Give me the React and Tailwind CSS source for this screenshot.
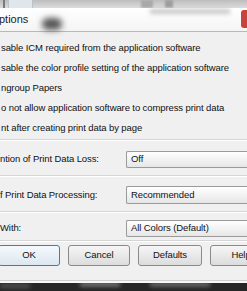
import React from 'react';

const checks = [
  'sable ICM required from the application software',
  'sable the color profile setting of the application software',
  'ngroup Papers',
  'o not allow application software to compress print data',
  'nt after creating print data by page',
];

const Separator = () => (
  <div className="h-[2px] border-t border-[#d5d5d5] border-b border-b-white" />
);

const Combo = ({ label, value, h }) => (
  <div className={`flex items-center ${h}`}>
    <div className="w-[126px] shrink-0 whitespace-nowrap">{label}</div>
    <div className="flex-1 h-full flex items-center pl-[4px] border border-[#9a9a9a] rounded-l-[2px] bg-gradient-to-b from-[#ffffff] to-[#e6e6e6] border-r-0 whitespace-nowrap">
      {value}
    </div>
  </div>
);

const Button = ({ children, primary, w = 'w-[62px]' }) => (
  <div
    className={`${w} h-[21px] shrink-0 flex items-center justify-center rounded-[3px] border ${
      primary
        ? 'border-[#3c7fb1] bg-gradient-to-b from-[#f4f9fc] to-[#dde7ef]'
        : 'border-[#8a8a8a] bg-gradient-to-b from-[#f6f6f6] to-[#dcdcdc]'
    }`}
  >
    {children}
  </div>
);

export default function App() {
  return (
    <div
      className="w-[247px] h-[291px] overflow-hidden bg-[#f0f0f0] text-[#111] text-[9.5px] tracking-[-0.1px] flex flex-col"
      style={{ fontFamily: '"Liberation Sans", Arial, sans-serif' }}
    >
      {/* window chrome above the dialog */}
      <div className="h-[8px] shrink-0 flex bg-gradient-to-b from-[#bdbdbd] to-[#dcdcdc]">
        <div className="w-[3px]" />
        <div className="w-[2px] bg-[#7a7a7a]" />
        <div className="w-[3px]" />
        <div className="w-[25px] bg-[#dfe6ec] border-x border-[#b9c3cc]" />
        <div className="w-[108px]" />
        <div className="w-[12px] bg-[#a9a9a9] blur-[1px]" />
        <div className="w-[12px]" />
        <div className="w-[8px] bg-[#9d9d9d] blur-[1px]" />
      </div>

      {/* title bar */}
      <div className="h-[23px] shrink-0 relative flex items-center bg-gradient-to-b from-[#ffffff] to-[#f4f4f4]">
        <span className="text-[11px] tracking-normal text-[#1a1a1a] -ml-[1px]">ptions</span>
        <div className="absolute left-[42px] top-[10px] w-[20px] h-[12px] rounded-full bg-[#555] blur-[3px]" />
        <div className="absolute left-[150px] top-[1px] w-[80px] h-[5px] bg-[#c8c8c8] blur-[2px]" />
        <div className="absolute left-[241px] top-[2px] w-[10px] h-[18px] rounded-[3px] bg-[#c8433a]" />
      </div>
      <div className="h-[1px] bg-[#b8b8b8]" />

      {/* check options */}
      <div className="pt-[6px] flex flex-col">
        {checks.map((t) => (
          <div key={t} className="h-[20px] flex items-center whitespace-nowrap pl-[1px]">
            {t}
          </div>
        ))}
      </div>

      <div className="mt-[1px]">
        <Separator />
      </div>

      <div className="pt-[10px] pb-[7px]">
        <Combo label="ntion of Print Data Loss:" value="Off" h="h-[17px]" />
      </div>
      <Separator />
      <div className="pt-[9px] pb-[7px]">
        <Combo label="f Print Data Processing:" value="Recommended" h="h-[18px]" />
      </div>
      <Separator />
      <div className="pt-[7px] pb-[3px]">
        <Combo label="With:" value="All Colors (Default)" h="h-[17px]" />
      </div>
      <Separator />

      {/* buttons */}
      <div className="pt-[3px] flex gap-[8px] -ml-[2px]">
        <Button primary>OK</Button>
        <Button>Cancel</Button>
        <Button w="w-[64px]">Defaults</Button>
        <Button>Help</Button>
      </div>

      <div className="flex-1" />
      <div className="h-[3px] bg-[#f7f7f7] border-t border-[#cfcfcf]" />
      <div className="h-[8px] shrink-0 relative bg-[#262626] overflow-hidden">
        <div className="absolute left-[0px] top-[1px] w-[30px] h-[4px] bg-[#555] blur-[2px]" />
        <div className="absolute left-[80px] top-[0px] w-[40px] h-[3px] bg-[#9a9a9a] blur-[2px]" />
        <div className="absolute left-[150px] top-[0px] w-[60px] h-[3px] bg-[#8a8a8a] blur-[2px]" />
      </div>
    </div>
  );
}
